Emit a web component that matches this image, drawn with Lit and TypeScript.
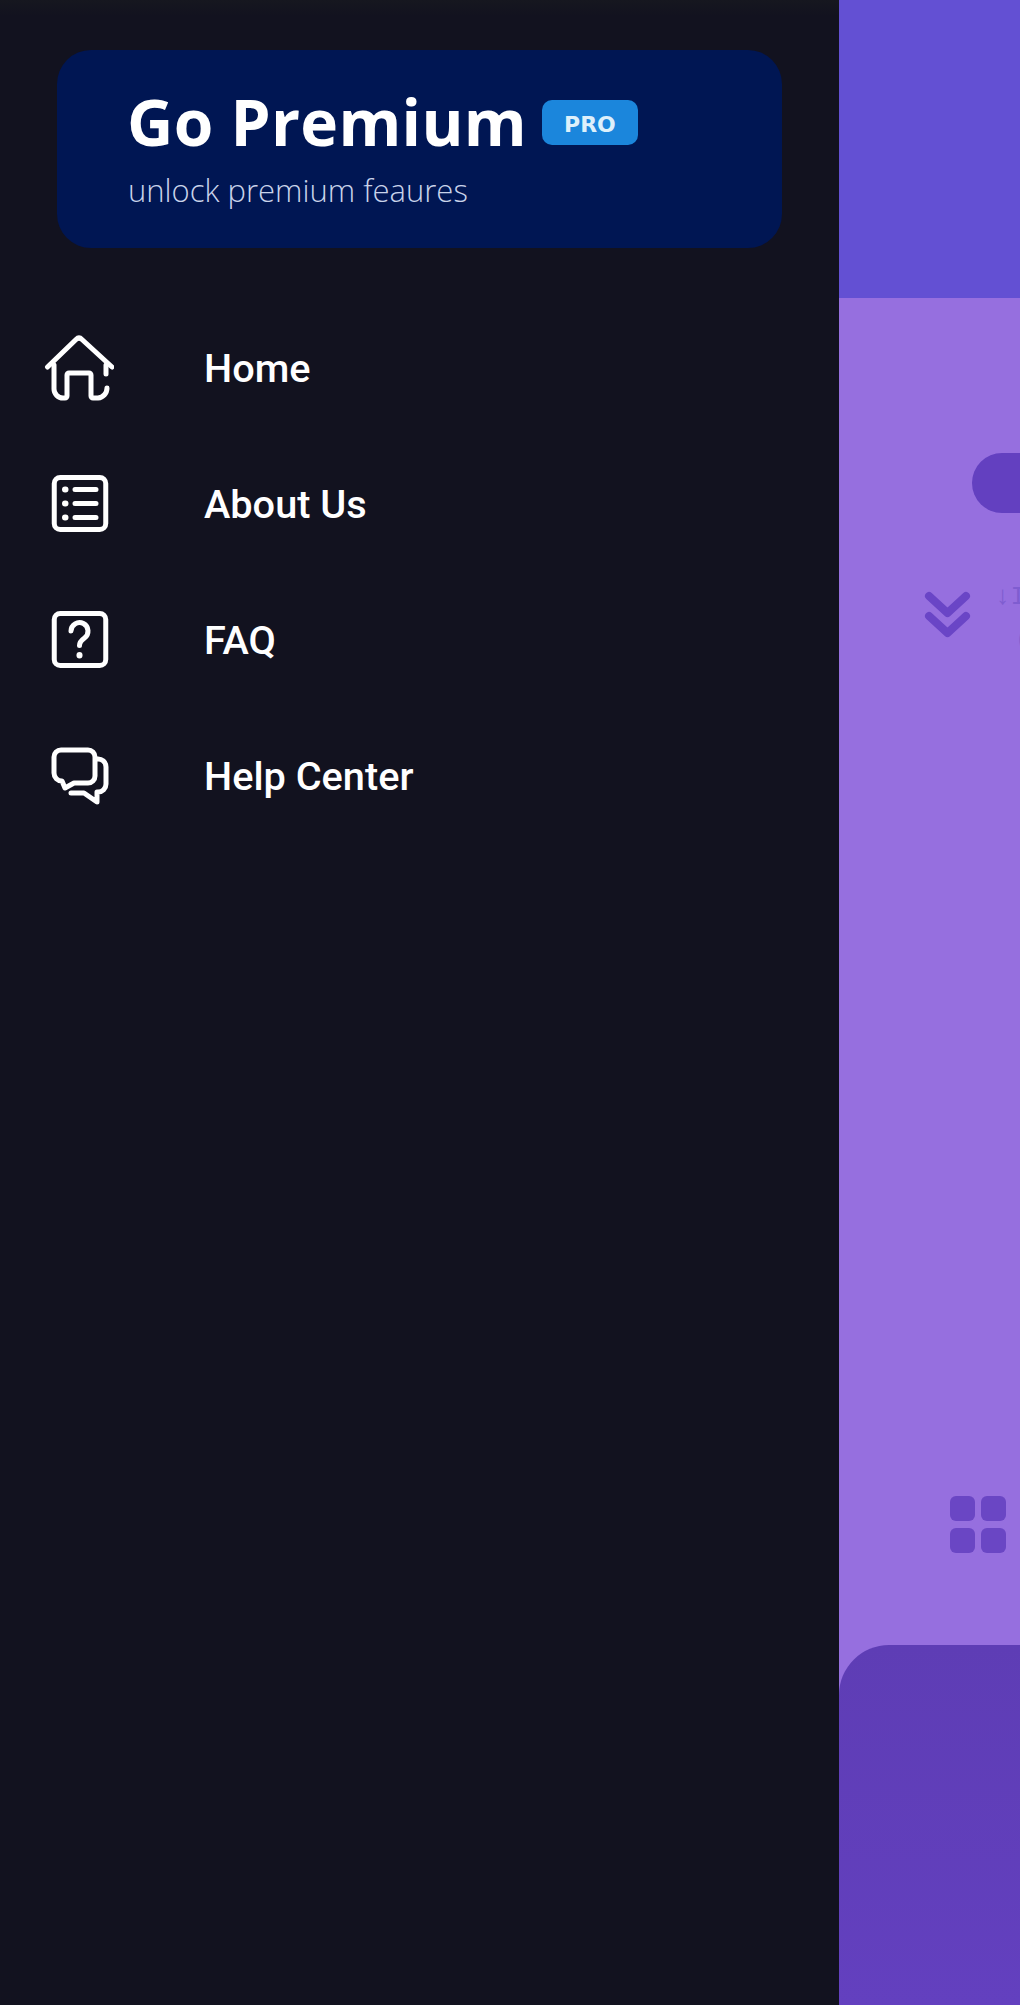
import { LitElement, html, css, svg } from 'lit';
import { customElement } from 'lit/decorators.js';

// icon coordinates are real pixels, measured from the 70px icon box
const icons = {
	home: svg`<path d="M3.500 34 32 6.500q3-3 6 0L68 34" />
		<path d="M10 32v24a9 9 0 0 0 9 9h2a2 2 0 0 0 2-2V42a2 2 0 0 1 2-2h20a2 2 0 0 1 2 2v21a2 2 0 0 0 2 2h5a10 10 0 0 0 9-10" />
		<path d="M62 32v9" />`,
	list: svg`<rect x="10.250" y="8.500" width="51.500" height="52" rx="6" />
		<path d="M31 20.500h21M31 34.500h21M31 48.500h21" />
		<path class="dot" d="M21 20.500h.5M21 34.500h.5M21 48.500h.5" />`,
	faq: svg`<rect x="10.250" y="8.500" width="51.500" height="52" rx="6" />
		<path d="M27 26a8.500 8.500 0 1 1 13.500 7c-3.500 2.500-5 4-5 7.500" />
		<path class="dot" d="M35.500 50v.5" />`,
	chat: svg`<path d="M17 9h27a7 7 0 0 1 7 7v19a7 7 0 0 1-7 7H30l-9 5-3-7a8 8 0 0 1-8-8V16a7 7 0 0 1 7-7Z" />
		<path d="M53 18a8 8 0 0 1 9 8v17a8 8 0 0 1-8 8h-1v10L40 52H27" />`,
};

const navItems: { label: string; icon: keyof typeof icons }[] = [
	{ label: 'Home', icon: 'home' },
	{ label: 'About Us', icon: 'list' },
	{ label: 'FAQ', icon: 'faq' },
	{ label: 'Help Center', icon: 'chat' },
];

@customElement('app-root')
export class AppRoot extends LitElement {
	static styles = css`
		:host {
			display: flex;
			width: 1020px;
			height: 2005px;
			overflow: hidden;
			background: #12121f;
		}
		.drawer {
			width: 839px;
			flex: none;
			box-sizing: border-box;
			padding-top: 50px;
			background: linear-gradient(#16171f 0, #12121f 16px);
		}
		.promo {
			box-sizing: border-box;
			width: 725px;
			height: 198px;
			margin-left: 57px;
			padding: 36px 0 0 71px;
			border-radius: 34px;
			background: #001653;
		}
		.promo-top {
			display: flex;
			align-items: center;
			gap: 15px;
			height: 72px;
		}
		.title {
			margin-left: -1px;
			font: 700 64px/72px "Open Sans", sans-serif;
			letter-spacing: 0.3px;
			color: #fff;
			white-space: nowrap;
		}
		.badge {
			box-sizing: border-box;
			width: 96px;
			height: 45px;
			margin-top: 1px;
			border-radius: 10px;
			background: #1b86dc;
			color: #ddf0fb;
			font: 700 22px/49px "DejaVu Sans", sans-serif;
			text-align: center;
		}
		.sub {
			margin-top: 11px;
			font: 300 31px/42px "Open Sans", sans-serif;
			color: #c9d3ea;
		}
		nav {
			display: flex;
			flex-direction: column;
			margin-top: 52px;
		}
		.item {
			display: flex;
			align-items: center;
			height: 136px;
			color: #fff;
			font: 500 39.700px/136px Roboto, sans-serif;
		}
		.item span {
			margin-top: 2px;
		}
		.item svg {
			width: 70px;
			height: 70px;
			margin-left: 44px;
			margin-right: 90px;
			flex: none;
			fill: none;
			stroke: #fff;
			stroke-width: 5;
			stroke-linecap: round;
			stroke-linejoin: round;
		}
		.item .dot {
			stroke-width: 6;
		}
		.peek {
			flex: 1;
			display: flex;
			flex-direction: column;
			min-width: 0;
			background: #966fdf;
		}
		.appbar {
			height: 298px;
			flex: none;
			background: #6350d3;
		}
		.content {
			flex: 1;
			box-sizing: border-box;
			display: flex;
			flex-direction: column;
			padding-top: 155px;
		}
		.pill {
			width: 60px;
			height: 60px;
			margin-left: 133px;
			flex: none;
			border-radius: 30px 0 0 30px;
			background: #6340c0;
		}
		.note {
			display: flex;
			gap: 22px;
			height: 70px;
			margin-top: 73px;
			margin-left: 84px;
			overflow: hidden;
		}
		.note svg {
			width: 50px;
			height: 50px;
			flex: none;
			margin-top: 2px;
			fill: none;
			stroke: #6a45c6;
			stroke-width: 8;
			stroke-linecap: round;
			stroke-linejoin: round;
		}
		.note-text {
			font: 400 26px/22px "Liberation Mono", monospace;
			color: #7f5dd0;
			white-space: nowrap;
		}
		.note-text div + div {
			margin-top: 21px;
			margin-left: 20px;
		}
		.grid {
			display: grid;
			grid-template-columns: repeat(2, 25px);
			grid-auto-rows: 25px;
			gap: 7px 6px;
			margin: auto 0 0 111px;
		}
		.grid i {
			border-radius: 6px;
			background: #6a46c4;
		}
		.sheet {
			height: 360px;
			flex: none;
			margin-top: 92px;
			border-top-left-radius: 50px;
			background: linear-gradient(#5e3db5, #6340bf);
		}
	`;

	render() {
		return html`
			<aside class="drawer">
				<div class="promo">
					<div class="promo-top">
						<span class="title">Go Premium</span>
						<span class="badge">PRO</span>
					</div>
					<div class="sub">unlock premium feaures</div>
				</div>
				<nav>
					${navItems.map(
						(item) => html`
							<div class="item">
								<svg viewBox="0 0 70 70">${icons[item.icon]}</svg>
								<span>${item.label}</span>
							</div>
						`
					)}
				</nav>
			</aside>
			<section class="peek">
				<div class="appbar"></div>
				<div class="content">
					<div class="pill"></div>
					<div class="note">
						<svg viewBox="0 0 50 50">
							<path d="M6 8 24.500 25 43 8" />
							<path d="M6 28 24.500 45 43 28" />
						</svg>
						<div class="note-text">
							<div>↓I</div>
							<div>(</div>
						</div>
					</div>
					<div class="grid"><i></i><i></i><i></i><i></i></div>
					<div class="sheet"></div>
				</div>
			</section>
		`;
	}
}
